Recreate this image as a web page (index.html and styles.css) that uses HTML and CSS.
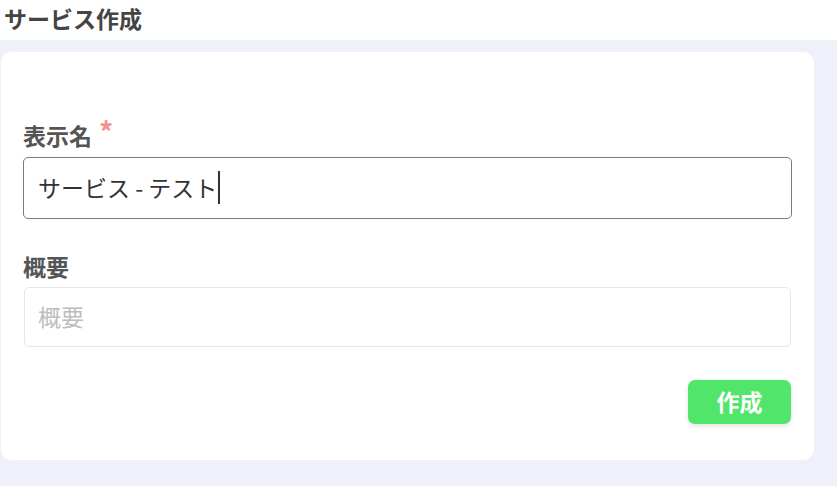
FILE: index.html
```html
<!DOCTYPE html>
<html lang="ja">
<head>
<meta charset="utf-8">
<link rel="stylesheet" href="styles.css">
</head>
<body>
<header class="top">
  <h1 class="title">サービス作成</h1>
</header>
<main class="main">
  <section class="card">
    <div class="field">
      <label class="label">表示名<span class="req">*</span></label>
      <div class="input input-active">サービス - テスト<span class="caret"></span></div>
    </div>
    <div class="field field-2">
      <label class="label">概要</label>
      <div class="input input-empty">概要</div>
    </div>
    <div class="actions">
      <button class="btn">作成</button>
    </div>
  </section>
</main>
</body>
</html>
```
FILE: styles.css
```css
* { box-sizing: border-box; }
html, body { margin: 0; padding: 0; }
body {
  width: 837px;
  height: 486px;
  overflow: hidden;
  background: #eef1f9;
  font-family: "Noto Sans CJK JP", "Noto Sans", sans-serif;
  color: #444;
}
.top {
  height: 40px;
  background: #fff;
  padding: 1px 0 0 4px;
}
.title {
  margin: 0;
  font-size: 23px;
  line-height: 34px;
  font-weight: 700;
  color: #444;
}
.main {
  padding: 12px 23px 0 1px;
}
.card {
  background: #fff;
  border-radius: 10px;
  height: 408px;
  padding: 69px 22px 0 22px;
}
.field { display: flex; flex-direction: column; }
.field-2 { margin-top: 33px; }
.label {
  font-size: 23px;
  font-weight: 700;
  line-height: 30px;
  color: #555;
  height: 36px;
  display: flex;
  align-items: flex-start;
  margin-top: -1px;
}
.req {
  color: #f98c8c;
  font-size: 28px;
  margin-left: 7px;
  line-height: 22px;
  margin-top: 0;
}
.input {
  height: 60px;
  border-radius: 5px;
  font-size: 23px;
  display: flex;
  align-items: center;
  padding-left: 14px;
  padding-bottom: 2px;
}
.input-active {
  border: 1px solid #7a7a7a;
  color: #333;
  height: 62px;
  margin-top: 1px;
  padding-left: 14px;
}
.input-empty {
  border: 1px solid #e6e6e6;
  color: #bdbdbd;
  margin-right: 1px;
  margin-left: 1px;
  padding-left: 13px;
}
.caret {
  display: inline-block;
  width: 2px;
  height: 33px;
  background: #333;
  margin-left: 1px;
}
.actions {
  display: flex;
  justify-content: flex-end;
  margin-top: 33px;
}
.btn {
  width: 103px;
  height: 44px;
  border: none;
  border-radius: 7px;
  background: #52e56b;
  color: #fff;
  font-family: "Noto Sans CJK JP", "Noto Sans", sans-serif;
  font-size: 23px;
  font-weight: 700;
  box-shadow: 0 2px 5px rgba(0,0,0,0.12);
  margin-right: 1px;
  padding: 0 0 2px 0;
}
```
